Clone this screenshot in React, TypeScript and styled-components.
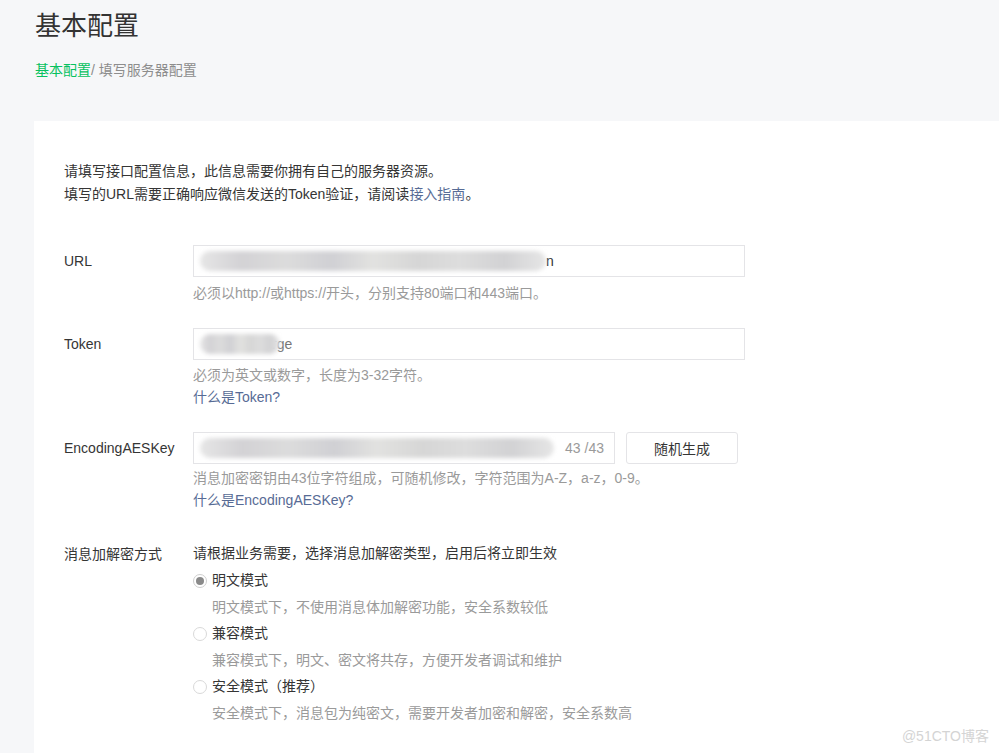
import styled, { createGlobalStyle } from "styled-components";

const GlobalStyle = createGlobalStyle`
  html, body {
    margin: 0;
    padding: 0;
    background: #f6f7f9;
  }
  body {
    font-family: "Liberation Sans", "Noto Sans CJK SC", sans-serif;
    color: #353535;
    font-size: 14px;
  }
`;

const Page = styled.div`
  width: 999px;
  height: 753px;
  overflow: hidden;
  position: relative;
  display: flex;
  flex-direction: column;
`;

const Header = styled.div`
  padding: 6px 0 0 35px;
  height: 121px;
  box-sizing: border-box;
`;

const Title = styled.h1`
  margin: 0;
  font-size: 26px;
  font-weight: normal;
  line-height: 40px;
  color: #333;
`;

const Crumbs = styled.div`
  margin-top: 13px;
  font-size: 14px;
  line-height: 22px;
  color: #8d8d8d;
`;

const CrumbLink = styled.span`
  color: #07c160;
`;

const Card = styled.div`
  flex: 1;
  margin-left: 34px;
  background: #fff;
  padding: 39px 0 0 30px;
`;

const Intro = styled.p`
  margin: 0;
  line-height: 23px;
  font-size: 14px;
`;

const Link = styled.a`
  color: #576b95;
  text-decoration: none;
`;

const Row = styled.div<{ $top?: number }>`
  display: grid;
  grid-template-columns: 129px 1fr;
  margin-top: ${(p) => p.$top ?? 24}px;
`;

const Label = styled.div<{ $lh?: number }>`
  font-size: 14px;
  line-height: ${(p) => p.$lh ?? 30}px;
  padding-top: 1px;
  color: #353535;
`;

const Field = styled.div`
  display: flex;
  flex-direction: column;
`;

const InputLine = styled.div`
  display: flex;
  gap: 11px;
`;

const Input = styled.div<{ $w: number }>`
  width: ${(p) => p.$w}px;
  height: 32px;
  box-sizing: border-box;
  border: 1px solid #e4e4e7;
  display: flex;
  align-items: center;
  padding: 0 10px 0 6px;
  font-size: 14px;
  color: #353535;
  overflow: hidden;
`;

const Mosaic = styled.span<{ $w: number }>`
  display: inline-block;
  width: ${(p) => p.$w}px;
  height: 20px;
  border-radius: 10px;
  background: linear-gradient(
    90deg,
    #e6e6e6 0%,
    #d3d2d5 12%,
    #dcdcdc 25%,
    #d0d0d4 38%,
    #e2e2e0 50%,
    #d6d6d6 63%,
    #dddddd 75%,
    #d2d2d4 88%,
    #e6e6e6 100%
  );
  filter: blur(2px);
  flex-shrink: 0;
`;

const Counter = styled.span`
  margin-left: auto;
  color: #9a9a9a;
  font-size: 14px;
`;

const Button = styled.button`
  width: 112px;
  height: 32px;
  border: 1px solid #e4e4e7;
  border-radius: 3px;
  background: #fff;
  color: #353535;
  font-family: inherit;
  font-size: 14px;
  padding: 0;
`;

const Hint = styled.div<{ $top?: number }>`
  margin-top: ${(p) => p.$top ?? 0}px;
  line-height: 22px;
  font-size: 14px;
  color: #9a9a9a;
`;

const Options = styled.div`
  display: flex;
  flex-direction: column;
`;

const Lead = styled.div`
  line-height: 27px;
`;

const Radio = styled.label`
  display: flex;
  align-items: center;
  gap: 5px;
  line-height: 27px;
`;

const Dot = styled.span<{ $on?: boolean }>`
  width: 14px;
  height: 14px;
  box-sizing: border-box;
  border-radius: 50%;
  border: 1px solid ${(p) => (p.$on ? "#cfcfcf" : "#d9d9d9")};
  display: flex;
  align-items: center;
  justify-content: center;
  &::after {
    content: "";
    width: 8px;
    height: 8px;
    border-radius: 50%;
    background: ${(p) => (p.$on ? "#8a8a8a" : "transparent")};
  }
`;

const OptDesc = styled.div`
  padding-left: 19px;
  line-height: 26px;
  color: #9a9a9a;
`;

const Watermark = styled.div`
  position: absolute;
  right: 10px;
  bottom: 8px;
  font-size: 14px;
  color: #d4d4d4;
`;

const modes = [
  { name: "明文模式", desc: "明文模式下，不使用消息体加解密功能，安全系数较低", on: true },
  { name: "兼容模式", desc: "兼容模式下，明文、密文将共存，方便开发者调试和维护", on: false },
  { name: "安全模式（推荐）", desc: "安全模式下，消息包为纯密文，需要开发者加密和解密，安全系数高", on: false },
];

export default function App() {
  return (
    <Page>
      <GlobalStyle />
      <Header>
        <Title>基本配置</Title>
        <Crumbs>
          <CrumbLink>基本配置</CrumbLink>/ 填写服务器配置
        </Crumbs>
      </Header>
      <Card>
        <Intro>请填写接口配置信息，此信息需要你拥有自己的服务器资源。</Intro>
        <Intro>
          填写的URL需要正确响应微信发送的Token验证，请阅读<Link>接入指南</Link>。
        </Intro>

        <Row $top={39}>
          <Label>URL</Label>
          <Field>
            <Input $w={552}>
              <Mosaic $w={346} />
              <span>n</span>
            </Input>
            <Hint $top={5}>必须以http://或https://开头，分别支持80端口和443端口。</Hint>
          </Field>
        </Row>

        <Row>
          <Label>Token</Label>
          <Field>
            <Input $w={552}>
              <Mosaic $w={80} />
              <span style={{ marginLeft: -8, color: "#777" }}>rge</span>
            </Input>
            <Hint $top={4}>必须为英文或数字，长度为3-32字符。</Hint>
            <Link>什么是Token?</Link>
          </Field>
        </Row>

        <Row $top={26}>
          <Label>EncodingAESKey</Label>
          <Field>
            <InputLine>
              <Input $w={422}>
                <Mosaic $w={354} />
                <Counter>43 /43</Counter>
              </Input>
              <Button>随机生成</Button>
            </InputLine>
            <Hint $top={3}>消息加密密钥由43位字符组成，可随机修改，字符范围为A-Z，a-z，0-9。</Hint>
            <Link>什么是EncodingAESKey?</Link>
          </Field>
        </Row>

        <Row $top={31}>
          <Label $lh={27}>消息加解密方式</Label>
          <Options>
            <Lead>请根据业务需要，选择消息加解密类型，启用后将立即生效</Lead>
            {modes.map((m) => (
              <div key={m.name}>
                <Radio>
                  <Dot $on={m.on} />
                  {m.name}
                </Radio>
                <OptDesc>{m.desc}</OptDesc>
              </div>
            ))}
          </Options>
        </Row>
      </Card>
      <Watermark>@51CTO博客</Watermark>
    </Page>
  );
}
